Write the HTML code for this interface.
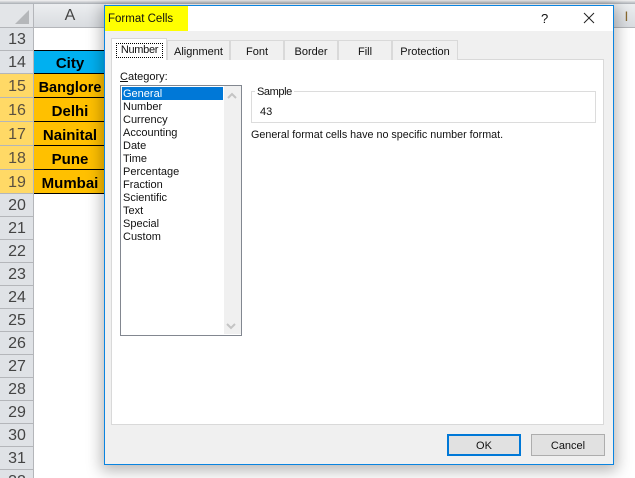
<!DOCTYPE html>
<html><head><meta charset="utf-8">
<style>
html,body{margin:0;padding:0;width:635px;height:478px;overflow:hidden;}
body{position:relative;background:#fff;font-family:"Liberation Sans",sans-serif;}
div{position:absolute;box-sizing:border-box;}
.rh{left:0;width:34px;background:#dfe2e6;border-right:1px solid #b4b6ba;border-bottom:1px solid #b4b6ba;color:#444;font-size:16px;text-align:center;padding-left:1px;}
.rs{background:#ffd966;color:#5a5040;}
.c{left:34px;width:72px;background:#ffc000;border-bottom:1px solid #000;font:bold 15px "Liberation Sans",sans-serif;color:#000;text-align:center;overflow:hidden;}
.t{font-size:11px;color:#111;white-space:nowrap;line-height:13px;}
.tab{top:40px;height:20px;background:#f0f0f0;border:1px solid #d9d9d9;border-bottom:none;font-size:11px;color:#111;text-align:center;line-height:23px;}
.li{left:123px;font-size:11px;line-height:13px;color:#111;}
</style></head><body>
<div style="left:0;top:0;width:635px;height:4px;background:linear-gradient(#f4f4f4,#a9adb3);"></div>
<div style="left:0;top:4px;width:34px;height:24px;background:#e3e5e8;border-right:1px solid #b4b6ba;border-bottom:1px solid #b4b6ba;"></div>
<svg style="position:absolute;left:14px;top:9px" width="16" height="16"><path d="M15 1V15H1Z" fill="#b5b7ba"/></svg>
<div style="left:34px;top:4px;width:72px;height:24px;background:linear-gradient(#eceef0,#d9dce0);border-bottom:1px solid #b4b6ba;color:#444;font-size:16px;text-align:center;line-height:24px;">A</div>
<div style="left:613px;top:4px;width:22px;height:24px;background:linear-gradient(#eceef0,#d9dce0);border-bottom:1px solid #b4b6ba;color:#8a6a30;font-size:14px;text-align:center;line-height:24px;padding-left:5px;">I</div>

<div class="rh" style="top:28px;height:23px;line-height:24px">13</div>
<div class="rh" style="top:51px;height:23px;line-height:24px">14</div>
<div class="rh rs" style="top:74px;height:24px;line-height:26px">15</div>
<div class="rh rs" style="top:98px;height:24px;line-height:26px">16</div>
<div class="rh rs" style="top:122px;height:24px;line-height:26px">17</div>
<div class="rh rs" style="top:146px;height:24px;line-height:26px">18</div>
<div class="rh rs" style="top:170px;height:24px;line-height:25px">19</div>
<div class="rh" style="top:194px;height:23px;line-height:24px">20</div>
<div class="rh" style="top:217px;height:23px;line-height:24px">21</div>
<div class="rh" style="top:240px;height:23px;line-height:24px">22</div>
<div class="rh" style="top:263px;height:23px;line-height:24px">23</div>
<div class="rh" style="top:286px;height:23px;line-height:24px">24</div>
<div class="rh" style="top:309px;height:23px;line-height:24px">25</div>
<div class="rh" style="top:332px;height:23px;line-height:24px">26</div>
<div class="rh" style="top:355px;height:23px;line-height:24px">27</div>
<div class="rh" style="top:378px;height:23px;line-height:24px">28</div>
<div class="rh" style="top:401px;height:23px;line-height:24px">29</div>
<div class="rh" style="top:424px;height:23px;line-height:24px">30</div>
<div class="rh" style="top:447px;height:23px;line-height:24px">31</div>
<div class="rh" style="top:470px;height:8px;line-height:24px;border-bottom:none;overflow:hidden;">32</div>

<div class="c" style="top:50px;height:24px;line-height:25px;background:#00b0f0;border-top:1px solid #000;">City</div>
<div class="c" style="top:74px;height:24px;line-height:28px;font-size:14.5px;">Banglore</div>
<div class="c" style="top:98px;height:24px;line-height:28px;">Delhi</div>
<div class="c" style="top:122px;height:24px;line-height:28px;">Nainital</div>
<div class="c" style="top:146px;height:24px;line-height:28px;">Pune</div>
<div class="c" style="top:170px;height:24px;line-height:27px;">Mumbai</div>

<!-- dialog -->
<div style="left:104px;top:5px;width:510px;height:460px;background:#f0f0f0;border:1px solid #0a84e0;box-shadow:0 3px 14px 3px rgba(0,0,0,.28);"></div>
<div style="left:105px;top:6px;width:508px;height:25px;background:#fff;"></div>
<div style="left:105px;top:6px;width:83px;height:25px;background:#ffff00;"></div>
<div class="t" style="left:108px;top:13px;font-size:11.5px;">Format Cells</div>
<div class="t" style="left:541px;top:12px;font-size:13px;">?</div>
<svg style="position:absolute;left:583px;top:12px" width="12" height="12"><path d="M1 1L11 11M11 1L1 11" stroke="#222" stroke-width="1" fill="none"/></svg>

<!-- tab panel -->
<div style="left:111px;top:59px;width:493px;height:366px;background:#fff;border:1px solid #d9d9d9;"></div>
<div class="tab" style="left:167px;width:63px;">Alignment</div>
<div class="tab" style="left:230px;width:54px;">Font</div>
<div class="tab" style="left:284px;width:54px;">Border</div>
<div class="tab" style="left:338px;width:54px;">Fill</div>
<div class="tab" style="left:392px;width:66px;">Protection</div>
<div class="tab" style="left:111px;top:38px;width:56px;height:22px;background:#fff;"></div>
<div class="t" style="left:116px;top:43px;width:47px;height:15px;border:1px dotted #000;text-align:center;line-height:13px;letter-spacing:-.3px;">Number</div>

<div class="t" style="left:120px;top:71px;"><span style="text-decoration:underline">C</span>ategory:</div>

<!-- list -->
<div style="left:120px;top:85px;width:122px;height:251px;background:#fff;border:1px solid #828790;"></div>
<div style="left:224px;top:86px;width:17px;height:248px;background:#f0f0f0;"></div>
<svg style="position:absolute;left:226px;top:91px" width="12" height="10"><path d="M2 7L6 3L10 7" stroke="#c4c4c4" stroke-width="2" fill="none"/></svg>
<svg style="position:absolute;left:225px;top:321px" width="12" height="10"><path d="M2 3L6 7L10 3" stroke="#c4c4c4" stroke-width="2" fill="none"/></svg>
<div style="left:122px;top:87px;width:101px;height:13px;background:#0078d7;"></div>
<div class="li" style="top:89px;color:#fff;line-height:11px;">General</div>
<div class="li" style="top:102px;line-height:11px;">Number</div>
<div class="li" style="top:115px;line-height:11px;">Currency</div>
<div class="li" style="top:128px;line-height:11px;">Accounting</div>
<div class="li" style="top:141px;line-height:11px;">Date</div>
<div class="li" style="top:154px;line-height:11px;">Time</div>
<div class="li" style="top:167px;line-height:11px;">Percentage</div>
<div class="li" style="top:180px;line-height:11px;">Fraction</div>
<div class="li" style="top:193px;line-height:11px;">Scientific</div>
<div class="li" style="top:206px;line-height:11px;">Text</div>
<div class="li" style="top:219px;line-height:11px;">Special</div>
<div class="li" style="top:232px;line-height:11px;">Custom</div>

<!-- sample -->
<div style="left:251px;top:91px;width:345px;height:32px;border:1px solid #dcdcdc;"></div>
<div class="t" style="left:255px;top:86px;background:#fff;padding:0 2px;letter-spacing:-.4px;height:11px;">Sample</div>
<div class="t" style="left:260px;top:106px;">43</div>
<div class="t" style="left:251px;top:129px;font-size:10.75px;">General format cells have no specific number format.</div>

<!-- buttons -->
<div style="left:447px;top:434px;width:74px;height:22px;background:#e1e1e1;border:2px solid #0078d7;font-size:11px;color:#111;text-align:center;line-height:20px;">OK</div>
<div style="left:531px;top:434px;width:74px;height:22px;background:#e1e1e1;border:1px solid #adadad;font-size:11px;color:#111;text-align:center;line-height:22px;">Cancel</div>
</body></html>
